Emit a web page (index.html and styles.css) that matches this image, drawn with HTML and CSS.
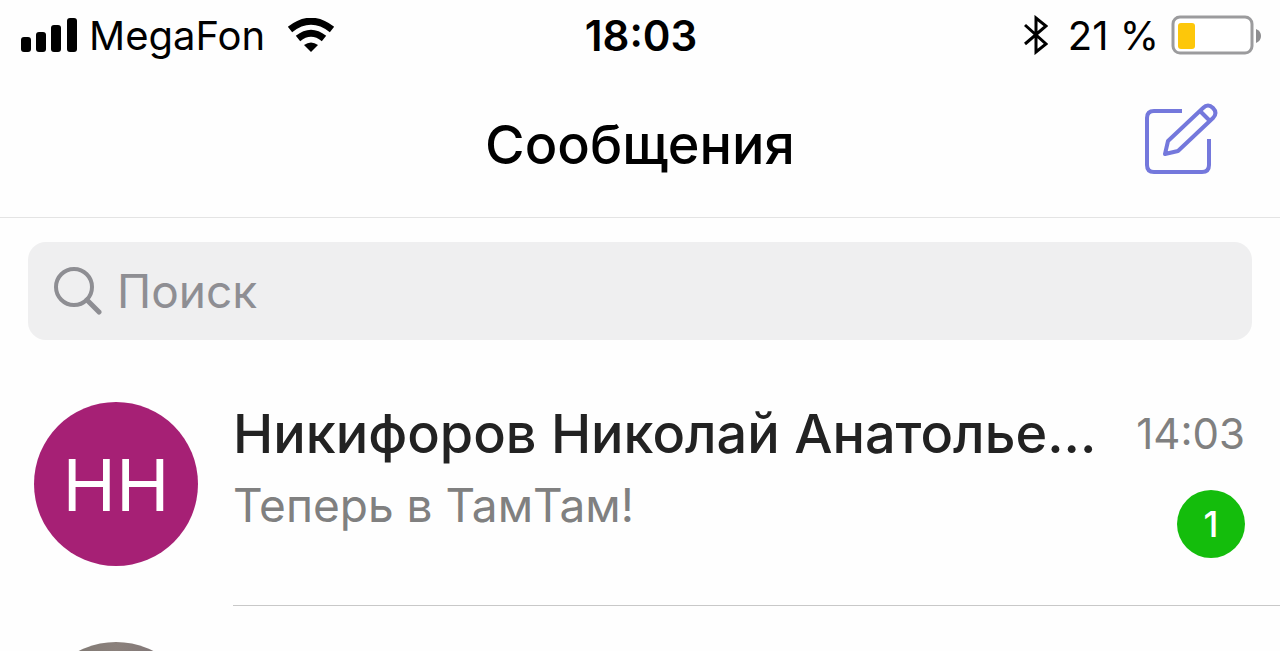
FILE: index.html
```
<!DOCTYPE html>
<html lang="ru">
<head>
    <meta charset="UTF-8">
    <meta name="viewport" content="width=device-width, initial-scale=1.0">
    <title>Сообщения</title>
    <link rel="stylesheet" href="styles.css">
</head>
<body>

    <!-- Статус-бар -->
    <div class="status-bar">
        <div class="status-left">
            <svg class="signal-icon" viewBox="0 0 57 34" width="57" height="34" aria-hidden="true">
                <rect x="1" y="19" width="10" height="15" rx="3"/>
                <rect x="16" y="14" width="10" height="20" rx="3"/>
                <rect x="31" y="7" width="10" height="27" rx="3"/>
                <rect x="47" y="0" width="10" height="34" rx="3"/>
            </svg>
            <span>MegaFon</span>
            <svg class="wifi-icon" viewBox="0 0 48 34" width="48" height="34" aria-hidden="true">
                <path d="M3 11.5Q24 -5 45 11.5" fill="none" stroke="#000" stroke-width="7"/>
                <path d="M11 20.5Q24 10 37 20.5" fill="none" stroke="#000" stroke-width="7"/>
                <path d="M17 27Q24 22 31 27L24 34Z"/>
            </svg>
        </div>
        <div class="status-time">18:03</div>
        <div class="status-right">
            <svg class="bluetooth-icon" viewBox="0 0 24 40" width="24" height="40" aria-hidden="true">
                <path d="M1 10L22 29L12 37V3L22 11L1 29" fill="none" stroke="#000" stroke-width="3"/>
            </svg>
            <span>21 %</span>
            <svg class="battery-icon" viewBox="0 0 91 40" width="91" height="40" aria-hidden="true">
                <rect x="2" y="2" width="79" height="36" rx="7" fill="#fff" stroke="#9b9b9d" stroke-width="3"/>
                <rect x="7" y="8" width="17" height="26" rx="3" fill="#fdc70a"/>
                <path d="M85 14Q90 16 90 21Q90 26 85 28Z" fill="#8e8e90"/>
            </svg>
        </div>
    </div>

    <header class="header">
        <h1>Сообщения</h1>
        <button class="compose-btn" type="button" aria-label="Новое сообщение">
            <svg viewBox="0 0 74 72" width="74" height="72" aria-hidden="true">
                <g fill="none" stroke="#7478dc" stroke-width="4" stroke-linejoin="round">
                    <path d="M38 8H10Q3 8 3 15V62Q3 69 10 69H58Q65 69 65 62V36"/>
                    <path d="M21 51L24 38L59 5Q64 0 69 5Q74 10 69 15L34 48Z"/>
                    <path d="M56 8L66 18"/>
                </g>
            </svg>
        </button>
    </header>

    <main>
        <!-- Поиск -->
        <label class="search">
            <svg viewBox="0 0 48 48" width="48" height="48" aria-hidden="true">
                <g fill="none" stroke="#8e8e93" stroke-linecap="round">
                    <circle cx="20" cy="20" r="18" stroke-width="4"/>
                    <path d="M33 33L45 45" stroke-width="5"/>
                </g>
            </svg>
            <input type="text" placeholder="Поиск" aria-label="Поиск">
        </label>

        <!-- Список чатов -->
        <ul class="chats">
            <li class="chat">
                <div class="avatar">НН</div>
                <div class="chat-body">
                    <div class="chat-text">
                        <div class="chat-name">Никифоров Николай Анатолье...</div>
                        <div class="chat-message">Теперь в ТамТам!</div>
                    </div>
                    <div class="chat-meta">
                        <time>14:03</time>
                        <span class="badge">1</span>
                    </div>
                </div>
            </li>
            <li class="chat">
                <div class="avatar avatar-photo"></div>
                <div class="chat-body"></div>
            </li>
        </ul>
    </main>

</body>
</html>
```
FILE: styles.css
```
:root {
    --text-color: #000;
    --name-color: #222;
    --muted-color: #808080;
    --search-color: #8e8e93;
    --line-color: #c8c8c8;
}

body {
    margin: 0;
    height: 100vh;
    overflow: hidden;
    background: #fefefe;
    color: var(--text-color);
    font-family: Inter, "Liberation Sans", sans-serif;
}

/* Статус-бар */
.status-bar {
    display: grid;
    grid-template-columns: 1fr auto 1fr;
    align-items: center;
    height: 70px;
    padding: 0 18px 0 20px;
    font-size: 40px;
}

.status-left,
.status-right {
    display: flex;
    align-items: center;
}

.status-left {
    gap: 12px;
}

.wifi-icon {
    margin-left: 10px;
}

.status-right {
    justify-content: flex-end;
    gap: 12px;
}

.bluetooth-icon {
    margin-right: 8px;
}

.status-time {
    font-size: 42px;
    font-weight: 600;
}

/* Шапка */
.header {
    display: grid;
    grid-template-columns: 1fr auto 1fr;
    align-items: center;
    height: 147px;
    padding: 0 62px;
    border-bottom: 1px solid #e4e4e4;
}

h1 {
    grid-column: 2;
    margin: 0;
    padding-top: 2px;
    font-size: 54px;
    font-weight: 500;
}

.compose-btn {
    justify-self: end;
    padding: 0 0 10px;
    border: none;
    background: none;
    cursor: pointer;
}

.compose-btn svg {
    display: block;
}

/* Поиск */
.search {
    display: flex;
    align-items: center;
    gap: 15px;
    height: 98px;
    margin: 24px 28px 26px;
    padding: 0 26px;
    box-sizing: border-box;
    border-radius: 18px;
    background: #efeff0;
}

.search input {
    flex: 1;
    min-width: 0;
    padding: 0;
    border: none;
    outline: none;
    background: none;
    color: var(--text-color);
    font-family: inherit;
    font-size: 46px;
}

.search input::placeholder {
    color: var(--search-color);
    opacity: 1;
}

/* Список чатов */
.chats {
    margin: 0;
    padding: 0;
    list-style: none;
}

.chat {
    display: flex;
    gap: 35px;
    height: 240px;
    padding-left: 34px;
}

.avatar {
    display: flex;
    align-items: center;
    justify-content: center;
    flex: none;
    width: 164px;
    height: 164px;
    margin-top: 36px;
    border-radius: 50%;
    background: #a62075;
    color: #fff;
    font-size: 72px;
}

.avatar-photo {
    background: linear-gradient(90deg, #77736d, #8b817c 50%, #776d73);
}

.chat-body {
    display: flex;
    flex: 1;
    gap: 24px;
    min-width: 0;
    box-sizing: border-box;
    padding: 36px 35px 0 0;
    border-bottom: 1px solid var(--line-color);
}

.chat-text {
    flex: 1;
    min-width: 0;
}

.chat-name {
    color: var(--name-color);
    font-size: 54px;
    font-weight: 500;
    line-height: 64px;
    white-space: nowrap;
}

.chat-message {
    margin-top: 7px;
    color: var(--muted-color);
    font-size: 46px;
    line-height: 64px;
}

.chat-meta {
    display: flex;
    flex-direction: column;
    align-items: flex-end;
    gap: 24px;
    color: var(--muted-color);
    font-size: 42px;
    line-height: 64px;
}

.badge {
    width: 68px;
    height: 68px;
    border-radius: 50%;
    background: #14bd0c;
    color: #fff;
    font-size: 36px;
    font-weight: 500;
    line-height: 68px;
    text-align: center;
}
```
